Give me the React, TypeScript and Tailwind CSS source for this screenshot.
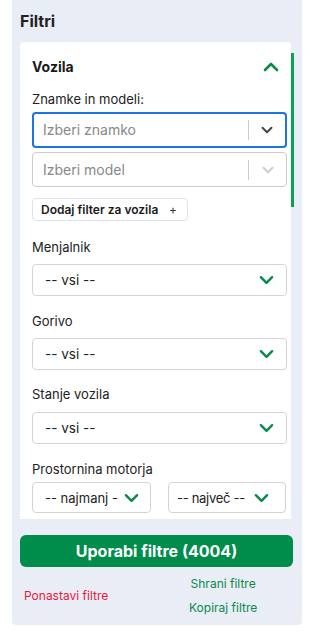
import React from "react";

const Down = ({ className }: { className: string }) => (
  <svg viewBox="0 0 16 10" className={className} fill="none" stroke="currentColor" strokeWidth={2.6} strokeLinecap="round" strokeLinejoin="round">
    <path d="M2 2l6 6 6-6" />
  </svg>
);

function PlainSelect({ value }: { value: string }) {
  return (
    <div className="flex h-8 items-center justify-between rounded border border-[#d4d4d4] bg-white pl-3 pr-3 text-[13.5px] leading-5 text-[#222]">
      <span>{value}</span>
      <Down className="h-[10px] w-[15px] text-[#0a8a4a]" />
    </div>
  );
}

export default function App() {
  return (
    <div className="min-h-[633px] bg-white font-['Inter',sans-serif]">
      <div className="ml-3 w-[290px] rounded-b bg-[#e9edf5] pl-2 pb-1">
        <h1 className="pt-[11px] pb-[11px] text-[16px] leading-5 font-bold text-[#222]">Filtri</h1>

        <div className="relative w-[271px]">
          <div className="rounded-t bg-white pt-[15px] pb-[6px] pl-3 pr-1">
            <div className="flex h-5 items-center justify-between pr-2">
              <h2 className="text-[14px] leading-5 font-bold text-[#1a1a1a]">Vozila</h2>
              <svg viewBox="0 0 16 10" className="h-[10px] w-[16px] text-[#0a8a4a]" fill="none" stroke="currentColor" strokeWidth={2.6} strokeLinecap="round" strokeLinejoin="round">
                <path d="M2 8l6-6 6 6" />
              </svg>
            </div>

            <p className="mt-3 text-[13px] leading-5 text-[#222]">Znamke in modeli:</p>
            <div className="mt-[3px] flex h-9 items-center rounded border-2 border-[#1a73e8] bg-white pl-[9px]">
              <span className="flex-1 text-[14px] leading-5 text-[#888]">Izberi znamko</span>
              <span className="h-[20px] w-px bg-[#ccc]" />
              <span className="flex w-9 justify-center">
                <Down className="h-[8px] w-[12px] text-[#444]" />
              </span>
            </div>
            <div className="mt-1 flex h-[35px] items-center rounded border border-[#ccc] bg-white pl-[10px]">
              <span className="flex-1 text-[14px] leading-5 text-[#888]">Izberi model</span>
              <span className="h-[20px] w-px bg-[#ccc]" />
              <span className="flex w-[37px] justify-center">
                <Down className="h-[8px] w-[12px] text-[#ccc]" />
              </span>
            </div>

            <button className="mt-[11px] flex h-[23px] w-[156px] items-center justify-between rounded border border-[#dde1ea] bg-white pl-2 pr-[10px] text-[12px] font-semibold text-[#1a1a1a]">
              Dodaj filter za vozila <span className="text-[12px] font-normal text-[#333]">+</span>
            </button>

            <p className="mt-4 text-[13px] leading-5 text-[#222]">Menjalnik</p>
            <div className="mt-[7px]"><PlainSelect value="-- vsi --" /></div>

            <p className="mt-[15px] text-[13px] leading-5 text-[#222]">Gorivo</p>
            <div className="mt-[7px]"><PlainSelect value="-- vsi --" /></div>

            <p className="mt-[14px] text-[13px] leading-5 text-[#222]">Stanje vozila</p>
            <div className="mt-2"><PlainSelect value="-- vsi --" /></div>

            <p className="mt-[15px] text-[13px] leading-5 text-[#222]">Prostornina motorja</p>
            <div className="mt-[3px] flex gap-[17px]">
              <div className="flex h-[31px] w-[119px] items-center rounded border border-[#d4d4d4] bg-white pl-3 text-[13px] leading-5 text-[#222]">
                <span className="w-[74px] overflow-hidden whitespace-nowrap">-- najmanj --</span>
                <Down className="ml-[5px] h-[10px] w-[15px] shrink-0 text-[#0a8a4a]" />
              </div>
              <div className="flex h-[31px] w-[118px] items-center justify-between rounded border border-[#d4d4d4] bg-white pl-[8px] pr-4 text-[13px] leading-5 tracking-[-0.3px] text-[#222]">
                <span className="whitespace-nowrap">-- največ --</span>
                <Down className="h-[10px] w-[15px] shrink-0 text-[#0a8a4a]" />
              </div>
            </div>
          </div>
          <div className="absolute right-[-3px] top-[11px] h-[154px] w-[3px] bg-[#0aa14f]" />
        </div>

        <button className="mt-4 h-8 w-[273px] rounded-md bg-[#008c4b] text-[16px] leading-5 font-bold text-white">
          Uporabi filtre (4004)
        </button>

        <div className="mt-[7px] flex items-center pb-[3px]">
          <span className="ml-1 w-[165px] text-[12px] leading-5 text-[#e8173f]">Ponastavi filtre</span>
          <div className="flex flex-col items-center gap-1 text-[12px] leading-5 text-[#0a8a4a]">
            <span>Shrani filtre</span>
            <span>Kopiraj filtre</span>
          </div>
        </div>
      </div>
    </div>
  );
}
